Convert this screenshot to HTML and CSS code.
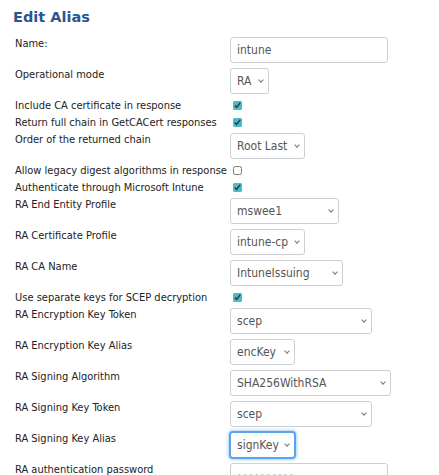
FILE: index.html
```html
<!DOCTYPE html>
<html lang="en">
<head>
    <meta charset="UTF-8">
    <meta name="viewport" content="width=device-width, initial-scale=1.0">
    <title>Edit Alias</title>
    <link rel="stylesheet" href="styles.css">
</head>
<body>

    <h1>Edit Alias</h1>

    <form class="alias-form">
        <label class="lbl">Name:</label>
        <div class="field"><input type="text" class="txt" value="intune"></div>

        <label class="lbl">Operational mode</label>
        <div class="field"><span class="sel w-ra"><select><option>RA</option></select></span></div>

        <label class="lbl chk-row">Include CA certificate in response</label>
        <div class="field chk-row"><input type="checkbox" checked></div>

        <label class="lbl chk-row">Return full chain in GetCACert responses</label>
        <div class="field chk-row"><input type="checkbox" checked></div>

        <label class="lbl">Order of the returned chain</label>
        <div class="field"><span class="sel w-root"><select><option>Root Last</option></select></span></div>

        <label class="lbl chk-row">Allow legacy digest algorithms in response</label>
        <div class="field chk-row"><input type="checkbox"></div>

        <label class="lbl chk-row">Authenticate through Microsoft Intune</label>
        <div class="field chk-row"><input type="checkbox" checked></div>

        <label class="lbl">RA End Entity Profile</label>
        <div class="field"><span class="sel w-eep"><select><option>mswee1</option></select></span></div>

        <label class="lbl">RA Certificate Profile</label>
        <div class="field"><span class="sel w-root"><select><option>intune-cp</option></select></span></div>

        <label class="lbl">RA CA Name</label>
        <div class="field"><span class="sel w-ca"><select><option>IntuneIssuing</option></select></span></div>

        <label class="lbl chk-row">Use separate keys for SCEP decryption</label>
        <div class="field chk-row"><input type="checkbox" checked></div>

        <label class="lbl">RA Encryption Key Token</label>
        <div class="field"><span class="sel w-token"><select><option>scep</option></select></span></div>

        <label class="lbl">RA Encryption Key Alias</label>
        <div class="field"><span class="sel w-key"><select><option>encKey</option></select></span></div>

        <label class="lbl">RA Signing Algorithm</label>
        <div class="field"><span class="sel w-alg"><select><option>SHA256WithRSA</option></select></span></div>

        <label class="lbl">RA Signing Key Token</label>
        <div class="field"><span class="sel w-token"><select><option>scep</option></select></span></div>

        <label class="lbl">RA Signing Key Alias</label>
        <div class="field"><span class="sel w-key"><select class="focused"><option>signKey</option></select></span></div>

        <label class="lbl">RA authentication password</label>
        <div class="field"><input type="password" class="txt pwd" value="secretpass"></div>
    </form>

</body>
</html>
```

FILE: styles.css
```css
/* Alias editor page */
body {
    font-family: 'DejaVu Sans Condensed', 'DejaVu Sans', Verdana, sans-serif;
    font-size: 11px;
    color: #222;
    background-color: #fff;
    margin: 0;
    padding: 8px 13px;
}
h1 {
    font-family: 'DejaVu Sans', Verdana, sans-serif;
    font-size: 14.5px;
    font-weight: bold;
    color: #2a568f;
    margin: 0 0 8px 0;
    line-height: 18px;
}
/* Two column form: labels left, controls right */
.alias-form {
    display: grid;
    grid-template-columns: 215px 1fr;
    padding-left: 2px;
}
.lbl, .field {
    box-sizing: border-box;
}
.lbl {
    line-height: 14px;
    padding-top: 3px;
    height: 31px;
}
.field {
    padding: 3px 0 2px 0;
    height: 31px;
}
.lbl.chk-row {
    height: 17px;
    padding: 2px 0 0 0;
    line-height: 15px;
}
.field.chk-row {
    height: 17px;
    padding: 0;
    display: flex;
    align-items: center;
}
input[type="checkbox"] {
    width: 9px;
    height: 9px;
    margin: 2px 0 0 3px;
    accent-color: #48bccb;
}
/* Text inputs and selects */
.txt, select {
    box-sizing: border-box;
    height: 26px;
    border: 1px solid #ccd0d4;
    border-radius: 3px;
    background-color: #fff;
    color: #555;
    font-family: 'DejaVu Sans Condensed', 'DejaVu Sans', Verdana, sans-serif;
    font-size: 12px;
    padding: 0 6px;
    margin: 0;
    outline: none;
}
.txt {
    width: 158px;
}
.pwd {
    font-size: 9px;
    letter-spacing: 1px;
}
.sel {
    display: inline-block;
    position: relative;
}
select {
    -webkit-appearance: none;
    appearance: none;
    width: 100%;
    padding-right: 14px;
}
/* little chevron on the right of the select */
.sel::after {
    content: "";
    position: absolute;
    right: 6px;
    top: 10px;
    width: 3px;
    height: 3px;
    border-right: 1px solid #777;
    border-bottom: 1px solid #777;
    transform: rotate(45deg);
    pointer-events: none;
}
select.focused {
    border: 1px solid #5ba4ec;
    box-shadow: 0 0 0 1px #5ba4ec, 0 0 3px 2px rgba(102, 175, 233, 0.55);
}
.w-ra { width: 39px; }
.w-root { width: 75px; }
.w-eep { width: 109px; }
.w-ca { width: 113px; }
.w-token { width: 142px; }
.w-key { width: 65px; }
.w-alg { width: 161px; }
```
